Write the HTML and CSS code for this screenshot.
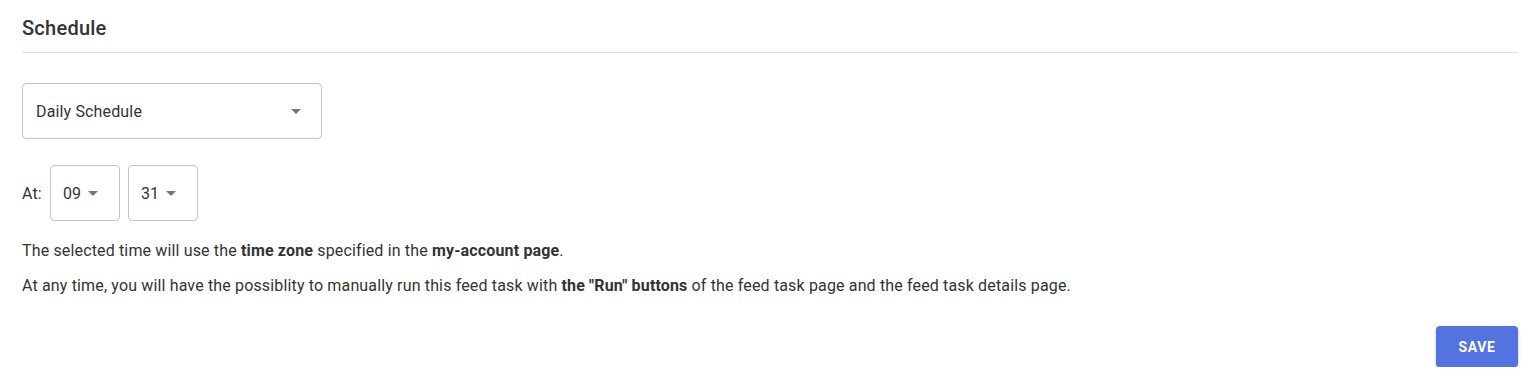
FILE: index.html
```html
<!DOCTYPE html>
<html lang="en">
<head>
<meta charset="utf-8">
<title>Schedule</title>
<link rel="stylesheet" href="styles.css">
</head>
<body>
<div class="page">
  <h2 class="title">Schedule</h2>
  <div class="select select-wide">
    <span>Daily Schedule</span>
    <span class="caret"></span>
  </div>
  <div class="time-row">
    <span class="at">At:</span>
    <div class="select select-small"><span>09</span><span class="caret"></span></div>
    <div class="select select-small"><span>31</span><span class="caret"></span></div>
  </div>
  <p class="note">The selected time will use the <b>time zone</b> specified in the <b>my-account page</b>.</p>
  <p class="note">At any time, you will have the possiblity to manually run this feed task with <b>the "Run" buttons</b> of the feed task page and the feed task details page.</p>
  <div class="actions">
    <button class="save">SAVE</button>
  </div>
</div>
</body>
</html>
```
FILE: styles.css
```css
html, body {
  margin: 0;
  padding: 0;
  background: #fff;
}
body {
  font-family: Roboto, "Liberation Sans", sans-serif;
  color: #333;
  letter-spacing: 0.15px;
}
.page {
  padding: 0 22px;
}
.title {
  margin: 0;
  padding: 16px 0 12px;
  font-size: 20px;
  line-height: 24px;
  font-weight: 500;
  letter-spacing: 0.25px;
  color: #333;
  border-bottom: 1px solid #e0e0e0;
}
.select {
  box-sizing: border-box;
  height: 56px;
  border: 1px solid #c4c4c4;
  border-radius: 4px;
  display: flex;
  align-items: center;
  font-size: 16px;
  color: #333;
}
.select-wide {
  width: 300px;
  margin-top: 30px;
  padding: 0 20px 0 13px;
  justify-content: space-between;
}
.select-small {
  width: 70px;
  padding-left: 12px;
  gap: 7px;
}
.caret {
  width: 0;
  height: 0;
  border-left: 5px solid transparent;
  border-right: 5px solid transparent;
  border-top: 5px solid #757575;
}
.time-row {
  display: flex;
  align-items: center;
  gap: 8px;
  margin-top: 26px;
}
.at {
  font-size: 16px;
}
.note {
  margin: 11px 0 0;
  font-size: 16px;
  line-height: 24px;
}
.time-row + .note {
  margin-top: 18px;
}
.note b {
  font-weight: 700;
}
.actions {
  display: flex;
  justify-content: flex-end;
  margin-top: 28px;
}
.save {
  width: 82px;
  height: 41px;
  border: none;
  border-radius: 4px;
  background: #5273e0;
  color: #fff;
  font-family: Roboto, "Liberation Sans", sans-serif;
  font-size: 14px;
  font-weight: 700;
  letter-spacing: 0.6px;
  box-shadow: 0 2px 2px rgba(0,0,0,0.2), 0 1px 4px rgba(0,0,0,0.12);
}
```
